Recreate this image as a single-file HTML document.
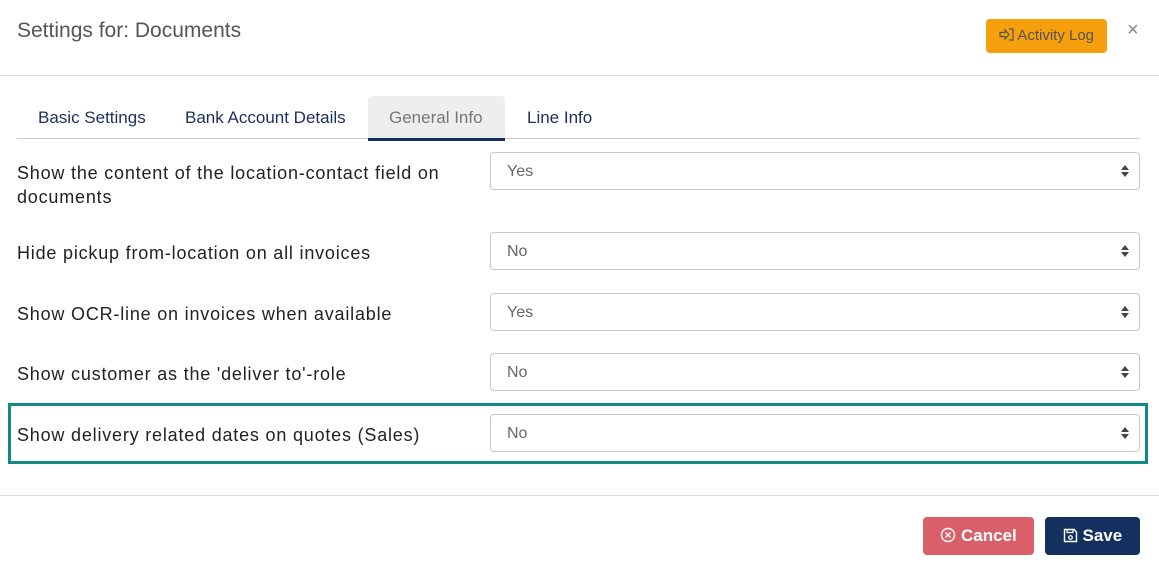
<!DOCTYPE html>
<html><head><style>
body{margin:0;width:1159px;height:574px;background:#fff;font-family:"Liberation Sans",sans-serif;position:relative;overflow:hidden;color:#222}
.a{position:absolute}
.title{left:17px;top:19px;font-size:21px;color:#555}
.hr{left:0;width:1159px;height:1px;background:#dcdcdc}
.tab{top:108px;font-size:17px;color:#1d2f5a}
.lab{left:17px;font-size:18px;color:#222;line-height:24px;letter-spacing:0.8px}
.sel{left:490px;width:648px;height:36px;border:1px solid #c8c8cc;border-radius:4px;font-size:16px;color:#666;line-height:38px;box-sizing:content-box}
.sel span{position:absolute;left:16px}
.sel i{position:absolute;right:14px;top:12px;width:0;height:0}
.sel i:before{content:"";position:absolute;left:-4px;top:0;border:4px solid transparent;border-bottom:5px solid #444;border-top:0}
.sel i:after{content:"";position:absolute;left:-4px;top:7px;border:4px solid transparent;border-top:5px solid #444;border-bottom:0}
.btn{border-radius:4px;font-size:17px;color:#fff;text-align:center;font-weight:bold}
</style></head><body>
<div class="a title">Settings for: Documents</div>
<div class="a btn" style="left:986px;top:19px;width:121px;height:34px;background:#f5a00c;color:#555;font-weight:normal;font-size:15px;line-height:34px">
<svg width="15" height="13" viewBox="0 0 15 13" style="vertical-align:-1px"><path d="M1 4.5h5V2l4 4.5-4 4.5V8.5H1z" fill="none" stroke="#555" stroke-width="1.2"/><path d="M10 1h4v11h-4" fill="none" stroke="#555" stroke-width="1.2"/></svg> Activity Log</div>
<div class="a" style="left:1127px;top:19px;font-size:20px;color:#888">×</div>
<div class="a hr" style="top:75px"></div>
<div class="a" style="left:368px;top:96px;width:137px;height:42px;background:#eeeeef;border-radius:4px 4px 0 0"></div>
<div class="a" style="left:17px;top:138px;width:1122px;height:1px;background:#c9ccd4"></div>
<div class="a" style="left:368px;top:138px;width:137px;height:3px;background:#14305e"></div>
<div class="a tab" style="left:38px">Basic Settings</div>
<div class="a tab" style="left:185px">Bank Account Details</div>
<div class="a tab" style="left:389px;color:#777">General Info</div>
<div class="a tab" style="left:527px">Line Info</div>

<div class="a lab" style="top:161px">Show the content of the location-contact field on<br>documents</div>
<div class="a sel" style="top:152px"><span>Yes</span><i></i></div>
<div class="a lab" style="top:241px">Hide pickup from-location on all invoices</div>
<div class="a sel" style="top:232px"><span>No</span><i></i></div>
<div class="a lab" style="top:302px">Show OCR-line on invoices when available</div>
<div class="a sel" style="top:293px"><span>Yes</span><i></i></div>
<div class="a lab" style="top:362px">Show customer as the 'deliver to'-role</div>
<div class="a sel" style="top:353px"><span>No</span><i></i></div>
<div class="a" style="left:8px;top:403px;width:1134px;height:55px;border:3px solid #0f8a86"></div>
<div class="a lab" style="top:423px">Show delivery related dates on quotes (Sales)</div>
<div class="a sel" style="top:414px"><span>No</span><i></i></div>

<div class="a hr" style="top:495px"></div>
<div class="a btn" style="left:923px;top:517px;width:111px;height:38px;line-height:38px;background:#d9606a">
<svg width="16" height="16" viewBox="0 0 16 16" style="vertical-align:-2px"><circle cx="8" cy="8" r="6.5" fill="none" stroke="#fff" stroke-width="1.4"/><path d="M5.5 5.5l5 5M10.5 5.5l-5 5" stroke="#fff" stroke-width="1.4"/></svg> Cancel</div>
<div class="a btn" style="left:1045px;top:517px;width:95px;height:38px;line-height:38px;background:#14305e">
<svg width="15" height="15" viewBox="0 0 15 15" style="vertical-align:-2px"><path d="M1.5 1.5h9.5l2.5 2.5v9.5h-12z" fill="none" stroke="#fff" stroke-width="1.4"/><path d="M4 1.5v3h6v-3" fill="none" stroke="#fff" stroke-width="1.2"/><circle cx="7.5" cy="9.5" r="1.8" fill="none" stroke="#fff" stroke-width="1.2"/></svg> Save</div>
</body></html>
